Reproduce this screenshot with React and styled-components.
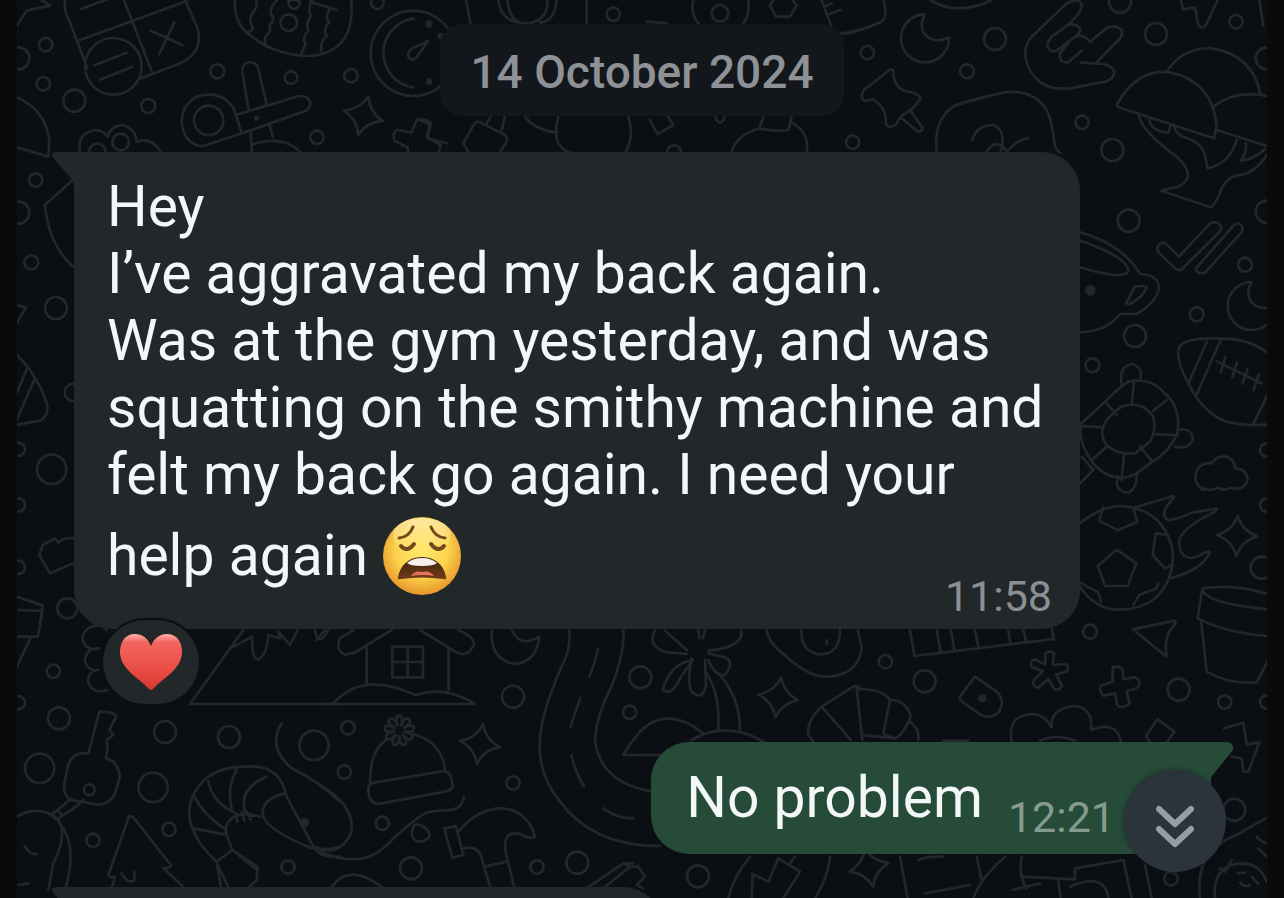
import React from "react";
import styled, { createGlobalStyle } from "styled-components";

const GlobalStyle = createGlobalStyle`
  * { box-sizing: border-box; }
  body { margin: 0; background: #0a0a0a; }
`;

const Screen = styled.main`
  position: relative;
  height: 100vh;
  margin: 0 17px;
  padding: 24px 0 0;
  overflow: hidden;
  background: #0b0f14;
  color: #f4f7f8;
  font-family: Roboto, "Liberation Sans", sans-serif;
`;

const WallpaperArt = styled.svg`
  position: absolute;
  inset: 0;
  width: 100%;
  height: 100%;
  fill: none;
  stroke: #22272c;
  stroke-width: 8;
  stroke-linecap: round;
  stroke-linejoin: round;

  .dot { fill: #22272c; stroke: none; }
`;

const Thread = styled.div`
  position: relative;
  display: flex;
  flex-direction: column;
`;

const DateChip = styled.time`
  align-self: center;
  padding: 21px 30px 17px;
  border-radius: 22px;
  background: #13171b;
  color: #8e9297;
  font-size: 46px;
  font-weight: 500;
  line-height: 54px;
`;

const Row = styled.div`
  display: flex;
  justify-content: ${(p) => (p.$sent ? "flex-end" : "flex-start")};
  margin-top: ${(p) => p.$gap}px;
  padding: ${(p) => (p.$sent ? "0 56px 0 0" : "0 0 0 57px")};
`;

const Bubble = styled.article`
  position: relative;
  display: flex;
  flex-direction: ${(p) => (p.$sent ? "row" : "column")};
  max-width: 1006px;
  min-height: 112px;
  padding: ${(p) => (p.$sent ? "22px 96px 12px 35px" : "21px 28px 8px 33px")};
  border-radius: ${(p) => (p.$sent ? "38px 0 38px 38px" : "0 38px 38px 38px")};
  background: ${(p) => (p.$sent ? "#264b38" : "#22272a")};
`;

const Preview = styled(Bubble)`
  width: 588px;
`;

const TailArt = styled.svg`
  position: absolute;
  top: 0;
  ${(p) => (p.$sent ? "left: 100%;" : "right: 100%;")}
  width: 22px;
  height: 38px;
  fill: ${(p) => (p.$sent ? "#264b38" : "#22272a")};
`;

const Text = styled.div`
  display: flow-root;
  font-size: 57px;
  line-height: 67px;
  white-space: pre-line;
`;

const Stamp = styled.time`
  float: right;
  align-self: flex-end;
  margin: ${(p) => (p.$sent ? "0 0 0 25px" : "63px 0 0")};
  color: ${(p) => (p.$sent ? "#859b8f" : "#8b8f92")};
  font-size: 43px;
  line-height: 50px;
`;

const EmojiArt = styled.svg`
  width: 80px;
  height: 80px;
  margin: 8px 0 0;
  vertical-align: -21px;
`;

const Reaction = styled.button`
  position: relative;
  display: flex;
  align-items: center;
  justify-content: center;
  align-self: flex-start;
  width: 100px;
  height: 88px;
  margin: -11px 0 0 84px;
  padding: 0;
  border: 2px solid #0b0f14;
  border-radius: 44px;
  background: #22272a;
`;

const HeartArt = styled.svg`
  width: 64px;
  height: 58px;
`;

const JumpButton = styled.button`
  position: absolute;
  right: 41px;
  bottom: 26px;
  display: flex;
  align-items: center;
  justify-content: center;
  width: 102px;
  height: 102px;
  padding: 10px 0 0;
  border: 0;
  border-radius: 50%;
  background: #2b333b;
  box-shadow: 0 0 5px rgba(11, 15, 20, 0.5);
`;

const ChevronArt = styled.svg`
  width: 40px;
  height: 44px;
  fill: none;
  stroke: #979da5;
  stroke-width: 6;
  stroke-linecap: round;
  stroke-linejoin: round;
`;

/* Each doodle patch is drawn on a grid three times finer than the page. */
const Patch = ({ x, y, children }) => (
  <g transform={`translate(${x} ${y}) scale(0.33333)`}>{children}</g>
);

const Rings = ({ at }) =>
  at.map(([cx, cy, r]) => <circle key={`${cx}-${cy}`} cx={cx} cy={cy} r={r} />);

const Star = ({ x, y, turn = 8 }) => (
  <path
    transform={`translate(${x} ${y}) rotate(${turn})`}
    d="M0-60Q14-16 60 0Q14 16 0 60Q-14 16-60 0Q-14-16 0-60Z"
  />
);

const Moon = ({ x, y }) => (
  <path
    transform={`translate(${x} ${y})`}
    d="M-2-70A72 72 0 1 0 72 2Q72-2 66 2C15 25-28-20-2-65Z"
  />
);

const Pompom = ({ x, y }) =>
  [0, 40, 80, 120, 160, 200, 240, 280, 320].map((a) => (
    <path
      key={a}
      transform={`translate(${x} ${y}) rotate(${a})`}
      d="M-5-16Q-15-42 0-45Q15-42 5-16"
    />
  ));

const Wallpaper = () => (
  <WallpaperArt viewBox="17 0 1250 898" preserveAspectRatio="xMidYMin slice" aria-hidden="true">
    <Patch x={0} y={0}>
      <path d="M195 0Q190 30 207 60L262 205M235 122L560 3M243 27L325-3M370-5L455 214M555 0L593 85Q610 155 545 188L415 238M452 92L547 135M523 67L478 162M283 196L380 158M300 239L396 201M125 0L150 17L80 32L45 85" />
      <path d="M705 0Q700 70 750 105Q820 165 930 168Q1030 160 1050 75Q1058 40 1053 0M768 0Q775 20 758 38Q745 55 755 75Q765 90 740 100M832 0Q810 20 812 40Q828 58 808 78Q815 94 797 110Q790 124 800 140M937 0Q920 28 933 48Q915 70 925 92Q905 112 917 132L905 160M930 5L1010 30M990 28Q972 48 988 66Q968 88 980 108Q958 126 965 154M865 5Q880-5 900 5Q900 23 882 27Q865 23 865 5" />
      <Rings at={[[866,68,25],[340,199,85],[137,134,20],[55,175,33],[130,251,20],[223,302,33],[445,318,21],[652,214,21],[873,233,19],[1053,227,20],[951,412,20],[1132,8,19],[626,361,44],[362,426,25],[292,456,25],[1240,160,128]]} />
      <path d="M1240 56A104 104 0 0 0 1240 262M1285 122L1248 174Q1235 184 1225 170Q1222 160 1232 148Z" />
      <circle className="dot" cx="1287" cy="72" r="11" /><circle className="dot" cx="1287" cy="245" r="10" /><circle className="dot" cx="770" cy="354" r="8" />
      <path d="M745 325L727 215Q725 190 750 186Q770 188 775 205L800 315M707 345L890 290Q920 282 930 305Q935 325 910 335L725 400L608 439Q555 435 545 370Q545 310 595 288Q670 270 703 330L725 400M752 395L756 455M808 375L818 410M762 432Q850 405 900 455M45 290Q135 325 148 420L145 470L45 440M240 455Q230 400 285 390Q310 390 322 410Q335 375 370 375Q405 385 410 425Q455 410 482 455" />
      <Star x={1090} y={347} turn={15} />
      <path d="M1224 455L1223 442L1184 423Q1175 398 1192 390L1234 398L1250 360Q1270 352 1293 370L1282 415L1340 430" />
    </Patch>

    <Patch x={420} y={0}>
      <path d="M138 0L152 75M235 0Q240 60 300 68M410 0Q405 65 360 68M262 0Q270 75 325 70Q385 60 382 0M500 0L500 70M680 65L740 70M820 0Q810 40 835 70M985 0Q990 45 970 70M1065-10L1110-10L1130 17L1110 50H1068L1050 17ZM1205 0L1240 95Q1280 110 1320 88M1218 18L1235 10M1228 42L1262 30" />
      <Rings at={[[580,43,20],[900,40,25],[1298,427,20],[762,458,22]]} />
      <path d="M130 430L165 368Q175 362 187 370L255 405Q265 415 258 428L240 455M130 430L145 455M200 370L212 350M245 390L255 350M0 360L30 375L20 410L62 435L50 480M315 350Q345 390 410 398M415 350Q390 440 455 460M625 350Q645 410 615 460M690 360L712 402L760 375L740 345M885 350Q900 385 915 350M1030 350L1018 385Q1065 395 1105 390L1115 350M1018 385Q950 405 935 455M1110 365Q1170 395 1160 455" />
      <circle className="dot" cx="62" cy="108" r="10" />
    </Patch>

    <Patch x={840} y={0}>
      <Moon x={255} y={113} />
      <path d="M0 100Q60 95 125 65Q145 45 130 0M270 0Q355 50 455 0M65 285Q70 265 88 258L145 212Q165 200 160 230Q170 265 195 273Q240 280 241 297Q230 315 209 332Q175 350 170 372Q145 390 137 370Q140 328 112 308Q102 294 90 300Q65 310 65 285M185 355L232 394Q250 396 246 381L212 333" />
      <path d="M575 110L680 10Q715-10 726 15Q725 35 690 70L635 110Q610 140 635 153Q645 160 680 128Q735 95 715 80Q700 70 685 75M660 160Q655 190 685 187L725 152M660 160L695 117Q725 95 750 125L800 84Q825 72 845 90Q850 110 830 125L770 187M723 188L790 192Q825 200 822 220Q820 242 780 248L690 265Q595 275 562 195Q545 145 575 110" />
      <path d="M290 455Q280 360 340 320Q370 305 490 278Q580 265 620 330Q635 360 643 425Q645 450 660 458M397 420Q410 375 460 375Q500 390 483 455M440 455Q470 410 502 455M502 453Q530 420 563 415" />
      <path d="M980 215Q1030 140 1115 145Q1240 165 1262 285M830 315Q890 205 990 217Q1120 245 1130 380L1122 415L835 322ZM1120 320Q1190 265 1290 290M1130 390L1280 438M895 340Q900 390 1010 470Q1075 530 1015 560L963 572L1112 622Q1125 618 1145 565Q1160 530 1200 525Q1245 520 1280 465M928 360Q935 395 985 398L993 374M1002 380Q1010 405 1035 412Q1090 430 1097 475L1103 505Q1170 490 1190 420M1217 430Q1222 455 1202 482Q1240 480 1275 447M1022 0L1030 28L1065 23L1075 75Q1085 90 1098 75L1133 0M1258 0L1270 78" />
      <Rings at={[[82,158,20],[465,117,33],[381,214,21],[948,102,33],[840,5,33],[1188,65,20],[1280,175,33],[726,367,20],[817,450,33],[1280,635,33]]} />
    </Patch>

    <Patch x={1040} y={200}>
      <path d="M115 95Q245 130 300 222Q360 225 356 270Q345 310 290 342L240 342Q200 395 115 397M115 120Q260 170 265 210Q260 245 115 200M285 260Q320 255 320 262Q310 290 270 312L258 310ZM354 155Q345 130 375 128L417 170L510 70Q535 60 544 82L540 94L425 208Q415 215 400 200ZM468 205L582 75Q600 62 609 86Q608 95 600 102L495 218Q480 225 468 212Z" />
      <circle className="dot" cx="151" cy="271" r="16" />
      <Moon x={635} y={316} />
      <path d="M418 440Q440 410 545 416Q630 415 690 465M418 440Q405 480 445 550Q490 640 560 665Q620 680 690 673M500 425L448 545M543 418L467 590M530 484L665 550M556 470L542 518M591 488L577 532M623 505L608 551M657 522L641 570M690 570L640 672" />
      <Rings at={[[266,62,33],[615,194,21],[470,343,21],[285,408,33],[157,496,21]]} />
      <path d="M245 555Q235 500 275 492Q312 500 300 540M122 672L195 605Q240 560 265 545Q330 530 375 580Q425 625 412 700Q390 755 330 790L290 820Q245 845 200 822Q165 805 145 768Q115 720 122 672M190 680Q200 650 245 620Q305 600 340 650Q350 690 330 725L285 760Q230 765 200 735Q180 710 190 680M282 545L275 612M195 605L230 645M380 600L340 632M122 678L190 682M345 702L412 706M155 780L200 740M245 840L252 765M335 782L300 740M412 690Q455 680 459 720Q445 750 405 740M235 830Q220 870 260 878Q290 875 290 820" />
    </Patch>

    <Patch x={1040} y={420}>
      <path d="M490 210Q455 185 472 150Q485 125 515 130Q530 105 560 110Q585 120 585 145Q620 145 623 180Q610 215 575 203Q550 215 535 203Q510 215 490 205M125 110L160 150L120 190" />
      <path d="M285 262L400 228Q405 230 395 240Q355 285 385 300Q410 300 455 278L530 266Q535 270 515 280Q415 330 417 370Q425 435 485 403Q510 390 510 397Q485 450 393 474M120 310Q180 260 240 258Q370 265 398 390Q405 480 345 535Q295 575 220 568Q160 560 120 500M190 262L177 302L234 331L292 306L280 265M230 389L289 430L263 498H195L173 437ZM385 345L347 340L338 405L375 445L395 435M120 488L175 518L183 545M280 555L298 525L350 505L355 490" />
      <Star x={591} y={347} turn={2} />
      <path d="M487 505Q590 490 690 525M487 505Q490 550 690 568M487 505L473 595Q560 640 690 648M483 600L500 755Q570 795 650 787L685 720M278 628L405 602Q410 605 400 618Q370 650 380 710ZM35 625L42 658" />
      <path d="M218 742Q240 735 248 750L251 777L285 772Q300 775 298 793Q298 806 260 813L269 850Q245 870 232 855L225 820L190 827Q177 815 182 797L218 785Z" />
      <path transform="translate(28 752)" d="M-12-52Q0-62 14-52L10-17L48-20Q62-10 52 2L20 12L38 46Q28 62 15 54L-4 25L-34 52Q-54 44-46 28L-20 2L-54-12Q-58-32-43-34L-12-18Z" />
      <Rings at={[[150,635,21],[416,809,33],[554,846,20],[680,846,20],[680,90,20],[680,255,20],[665,443,33]]} />
    </Patch>

    <Patch x={0} y={600}>
      <path d="M51 30L128 33L113 110H51M88 3L128 18M92 113L51 200M320 90Q300 65 265 85Q235 110 255 135Q275 155 298 145Q255 145 255 185Q265 215 295 210Q260 215 265 250Q285 285 320 270M570 312L730 90M695 143L757 110Q755 180 775 178Q800 165 805 105L840 115L835 95L870 135L893 90M945 90Q955 145 985 90M570 312H1020" />
      <path d="M265 460Q215 455 203 500L192 555Q190 590 215 600L290 613Q325 618 345 580L360 530Q355 500 340 485L318 474L323 445L320 420L340 405L328 390L348 350Q345 335 298 335ZM215 595L155 645M250 600Q220 630 180 650M50 650Q110 615 165 650Q210 690 160 790L145 870M180 670Q235 740 195 870M75 740Q90 765 110 762M55 855L85 850" />
      <path d="M387 650Q395 645 402 655L513 795Q510 805 490 805L560 870M387 650L325 825Q330 835 345 830L333 870M365 820Q385 855 403 840V815M845 370Q800 440 875 505Q950 540 1020 605" />
      <path d="M650 785Q595 735 577 685Q555 630 585 575Q630 500 735 500Q840 490 860 590L940 740Q960 775 1020 770M585 590Q605 640 680 690M625 545Q640 610 700 635M710 510Q680 560 695 625M800 530Q715 565 735 635M855 580Q785 595 788 645Q800 690 935 745M577 685L675 703M650 785L697 750L675 690Q690 625 780 650M697 750L773 800L770 840L740 870M650 790L665 870M650 790L690 870M697 750L765 805M940 740Q980 755 1020 740M708 640L712 665M725 635L733 662M740 635L752 658" />
      <circle className="dot" cx="913" cy="668" r="15" />
      <Rings at={[[202,25,30],[160,214,20],[177,355,33],[119,505,44],[495,396,33],[687,411,33],[459,562,44],[942,436,44],[279,721,20],[507,688,20],[864,801,20],[268,569,16],[55,308,20],[170,645,12]]} />
    </Patch>

    <Patch x={320} y={600}>
      <path d="M100 90L60 115Q45 150 75 164L105 157L215 90M300 90L410 157Q445 175 463 130Q460 110 415 90M140 140V255M386 145V270M217 140H309V232H217ZM263 140V232M217 186H309M0 312H465Q380 255 285 285Q130 210 40 310M-10 120L15 90M515 90Q510 180 585 192Q650 185 658 110Q600 145 575 90" />
      <path d="M198 420Q150 450 150 550M280 403Q365 425 375 510M160 548L375 513Q397 520 398 560Q395 572 375 575L175 612Q145 610 145 565Q145 555 160 548" />
      <Pompom x={238} y={392} />
      <Star x={480} y={432} turn={9} />
      <path d="M0 555Q110 620 93 700Q60 765 0 748M0 755Q120 805 190 745C245 690 280 660 315 640C370 620 420 650 432 590M280 678Q265 725 305 725Q350 710 310 680Q295 668 280 678M35 860Q90 785 190 865M747 90Q755 140 725 200C640 390 635 500 720 605Q820 740 1020 738M910 90Q915 160 870 270Q830 345 825 420Q840 550 1000 575M834 147Q825 190 808 230M781 293L752 380M754 465Q765 515 792 560M850 625Q890 655 940 655M960 395Q930 430 910 465H1020" />
      <path d="M373 685L408 678L430 765L397 773ZM415 695C500 590 620 610 645 710Q635 720 600 702Q545 690 558 760L583 865M430 745Q475 735 485 775L512 865M493 800L562 785M800 865L910 790L930 800L850 865M930 800L955 800L975 830L950 855L970 865M910 790L940 790" />
      <Rings at={[[84,383,20],[73,516,20],[187,670,20],[273,805,33],[579,290,33],[579,549,20],[651,801,20],[772,788,33],[961,232,33],[929,337,20]]} />
    </Patch>

    <Patch x={640} y={610}>
      <path d="M45 60Q20 110 80 127L140 132M160 150Q90 160 68 240Q95 260 120 205L155 155M155 145Q140 220 155 245Q190 275 198 225L195 150M205 150Q225 200 255 195Q285 155 255 142L205 130M205 122Q315 110 303 60M140 120L75 62M175 60L178 85M195 60L188 85M195 185Q240 240 235 360M235 190Q300 260 300 360M0 365Q80 285 190 370M155 390Q260 330 370 395M0 435H50" />
      <path d="M380 60Q385 100 440 140Q510 205 570 200Q660 190 665 110L653 60M485 60Q480 120 535 133Q600 135 600 60M560 90L560 102M810 60L823 138L1240 87M890 60L902 127M933 60L943 122M1005 60L1015 112M1105 60L1110 98M1150 60L1158 92" />
      <Star x={415} y={262} turn={8} />
      <path d="M505 375Q500 330 545 290L640 230Q655 225 660 238Q725 235 750 270Q800 270 812 320L808 335Q840 355 835 390M545 290L632 390M650 235L667 390M750 270L730 370M810 325Q785 380 765 385L667 375M735 375L765 385M505 375L520 395M960 260L1005 200L1070 245Q1095 270 1080 300Q1055 335 1015 310L960 270ZM910 392H985" />
      <circle className="dot" cx="1027" cy="265" r="12" />
      <Star x={687} y={772} turn={-12} />
      <path d="M265 865Q280 800 330 740M570 740Q565 800 525 865M335 865L338 792L385 815L415 745L480 785L430 865M450 760L465 740M780 740L803 865M835 750Q860 738 910 740M855 850L990 825M1010 740L1025 810M1095 740Q1020 805 1000 865M1145 740Q1135 800 1160 835M1118 840L1200 820" />
      <Rings at={[[736,155,20],[854,214,33],[174,799,33]]} />
    </Patch>

    <Patch x={960} y={620}>
      <path d="M155 365Q140 285 220 282Q255 285 275 322Q270 265 345 258Q400 265 393 330Q470 300 483 365M240 362Q285 340 345 362M558 348L592 298L643 335L620 368M558 348L570 368M792 325L850 308L860 373L898 368L865 455L850 455L845 415L815 410M750 700Q785 660 830 645L925 590M720 834Q710 745 750 700M765 834Q755 735 845 730Q900 730 920 785M890 650Q905 670 925 668M895 685L920 710M780 745L795 755L815 722M833 760L855 758M840 788Q855 805 870 795M875 770L895 792" />
      <path d="M190 770L345 778M295 785L302 834M345 778V745L490 720L515 834M330 800Q435 755 445 834M555 735L575 834" />
      <Rings at={[[823,569,33],[633,776,20]]} />
    </Patch>

    <Patch x={0} y={130}>
      <path d="M218 150L135 225Q145 340 218 410M50 525L78 532L50 580M50 675Q110 730 142 825Q145 860 120 872L50 885M83 712L50 790M105 745L50 870M220 1225Q195 1220 175 1238L165 1225L128 1245L118 1275L150 1330L220 1300M50 1400L128 1425L120 1480" />
      <Rings at={[[107,150,20],[55,248,33],[94,397,21],[168,534,33],[155,1018,44],[55,958,20],[55,1125,20],[55,1312,20],[220,787,26]]} />
    </Patch>
  </WallpaperArt>
);

const Tail = ({ $sent = false }) => (
  <TailArt $sent={$sent} viewBox="0 0 22 38" aria-hidden="true">
    {$sent ? (
      <path d="M-1 0H15Q23 0 22 8L1 34L-1 38Z" />
    ) : (
      <path d="M23 0H4Q-3 1 2 7L18 25Q22 30 23 38Z" />
    )}
  </TailArt>
);

const WearyFace = () => (
  <EmojiArt viewBox="0 0 80 80" role="img" aria-label="weary face">
    <defs>
      <radialGradient id="skin" cx="50%" cy="42%" r="56%">
        <stop offset="0" stopColor="#ffe86b" />
        <stop offset="0.6" stopColor="#fbd34e" />
        <stop offset="1" stopColor="#e99b2d" />
      </radialGradient>
      <linearGradient id="shine" x1="0" y1="0" x2="0" y2="1">
        <stop offset="0" stopColor="#fff3c0" stopOpacity="0.75" />
        <stop offset="1" stopColor="#fff3c0" stopOpacity="0" />
      </linearGradient>
      <linearGradient id="mouth" x1="0" y1="0" x2="0" y2="1">
        <stop offset="0" stopColor="#3f2410" />
        <stop offset="1" stopColor="#6f3b17" />
      </linearGradient>
    </defs>
    <circle cx="40" cy="40" r="39" fill="url(#skin)" />
    <ellipse cx="40" cy="19" rx="29" ry="17" fill="url(#shine)" />
    <g fill="none" stroke="#70481a" strokeWidth="3" strokeLinecap="round">
      <path d="M17 22Q27 21 31 11M49 11Q53 21 63 22" />
      <path d="M19 30Q25 37 32 28M49 28Q56 37 62 30" strokeWidth="4" />
    </g>
    <path d="M16 61C18 50 26 41 40 41S62 50 64 61Q65 64 61 63Q40 60 19 63Q15 64 16 61Z" fill="url(#mouth)" />
    <path d="M25 47Q31 42 40 42T55 47Q52 50 40 50T25 47Z" fill="#f4f1ea" />
    <path d="M29 60Q33 54 40 56Q48 54 52 60Q40 58 29 60Z" fill="#e8715f" />
  </EmojiArt>
);

const Heart = () => (
  <HeartArt viewBox="0 0 64 58" aria-hidden="true">
    <defs>
      <linearGradient id="heart" x1="0" y1="0" x2="0" y2="1">
        <stop offset="0" stopColor="#ffb0a9" />
        <stop offset="0.15" stopColor="#f4645f" />
        <stop offset="0.6" stopColor="#ea4f48" />
        <stop offset="1" stopColor="#d8382e" />
      </linearGradient>
    </defs>
    <path
      d="M32 13C35 5 41 1 48 1C58 1 63 9 63 19C63 36 44 45 35 55Q32 59 29 55C20 45 1 36 1 19C1 9 6 1 16 1C23 1 29 5 32 13Z"
      fill="url(#heart)"
    />
  </HeartArt>
);

export default function App() {
  return (
    <>
      <GlobalStyle />
      <Screen>
        <Wallpaper />
        <Thread>
          <DateChip dateTime="2024-10-14">14 October 2024</DateChip>

          <Row $gap={36}>
            <Bubble>
              <Tail />
              <Text>
                {"Hey\nI’ve aggravated my back again.\nWas at the gym yesterday, and was squatting on the smithy machine and felt my back go again. I need your help again "}
                <WearyFace />
                <Stamp dateTime="11:58">11:58</Stamp>
              </Text>
            </Bubble>
          </Row>
          <Reaction type="button" aria-label="Heart reaction">
            <Heart />
          </Reaction>

          <Row $sent $gap={36}>
            <Bubble $sent>
              <Tail $sent />
              <Text>No problem</Text>
              <Stamp $sent dateTime="12:21">12:21</Stamp>
            </Bubble>
          </Row>

          <Row $gap={33}>
            <Preview>
              <Tail />
            </Preview>
          </Row>
        </Thread>
        <JumpButton type="button" aria-label="Scroll to latest message">
          <ChevronArt viewBox="0 0 40 44" aria-hidden="true">
            <path d="M4 5L20 20L36 5M4 25L20 40L36 25" />
          </ChevronArt>
        </JumpButton>
      </Screen>
    </>
  );
}
